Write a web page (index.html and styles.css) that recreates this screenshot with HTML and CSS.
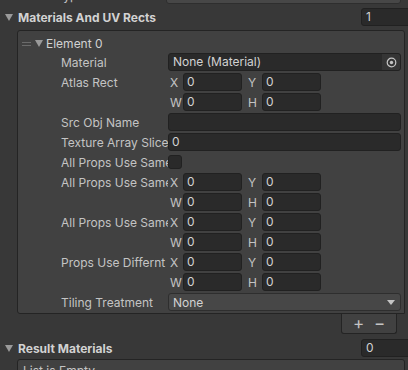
FILE: index.html
```html
<!DOCTYPE html>
<html lang="en">
<head>
    <meta charset="UTF-8">
    <title>Inspector</title>
    <link rel="stylesheet" href="styles.css">
</head>
<body>
    <div class="inspector">
        <div class="prop top-row">
            <span class="prop-label">Result Type</span>
            <div class="popup wide">Atlas<span class="popup-arrow"></span></div>
        </div>

        <div class="foldout-head">
            <span class="fold-arrow"></span>
            <span class="foldout-title">Materials And UV Rects</span>
            <div class="field size-field">1</div>
        </div>

        <div class="list-box">
            <div class="element-head">
                <span class="drag-handle"></span>
                <span class="fold-arrow"></span>
                <span class="element-title">Element 0</span>
            </div>

            <div class="prop">
                <span class="prop-label">Material</span>
                <div class="field object-field">
                    <span class="object-name">None (Material)</span>
                    <span class="picker">
                        <svg width="11" height="11" viewBox="0 0 11 11">
                            <circle cx="5.5" cy="5.5" r="4.3" fill="none" stroke="#c4c4c4" stroke-width="1.2"/>
                            <circle cx="5.5" cy="5.5" r="1.7" fill="#c4c4c4"/>
                        </svg>
                    </span>
                </div>
            </div>
            <div class="prop">
                <span class="prop-label">Atlas Rect</span>
                <div class="vec">
                    <span class="axis">X</span><div class="field num">0</div>
                    <span class="axis second">Y</span><div class="field num">0</div>
                </div>
            </div>
            <div class="prop">
                <span class="prop-label"></span>
                <div class="vec">
                    <span class="axis">W</span><div class="field num">0</div>
                    <span class="axis second">H</span><div class="field num">0</div>
                </div>
            </div>
            <div class="prop">
                <span class="prop-label">Src Obj Name</span>
                <div class="field text-field"></div>
            </div>
            <div class="prop">
                <span class="prop-label">Texture Array Slice</span>
                <div class="field text-field">0</div>
            </div>
            <div class="prop">
                <span class="prop-label">All Props Use Same</span>
                <span class="checkbox"></span>
            </div>
            <div class="prop">
                <span class="prop-label">All Props Use Same</span>
                <div class="vec">
                    <span class="axis">X</span><div class="field num">0</div>
                    <span class="axis second">Y</span><div class="field num">0</div>
                </div>
            </div>
            <div class="prop">
                <span class="prop-label"></span>
                <div class="vec">
                    <span class="axis">W</span><div class="field num">0</div>
                    <span class="axis second">H</span><div class="field num">0</div>
                </div>
            </div>
            <div class="prop">
                <span class="prop-label">All Props Use Same</span>
                <div class="vec">
                    <span class="axis">X</span><div class="field num">0</div>
                    <span class="axis second">Y</span><div class="field num">0</div>
                </div>
            </div>
            <div class="prop">
                <span class="prop-label"></span>
                <div class="vec">
                    <span class="axis">W</span><div class="field num">0</div>
                    <span class="axis second">H</span><div class="field num">0</div>
                </div>
            </div>
            <div class="prop">
                <span class="prop-label">Props Use Differnt</span>
                <div class="vec">
                    <span class="axis">X</span><div class="field num">0</div>
                    <span class="axis second">Y</span><div class="field num">0</div>
                </div>
            </div>
            <div class="prop">
                <span class="prop-label"></span>
                <div class="vec">
                    <span class="axis">W</span><div class="field num">0</div>
                    <span class="axis second">H</span><div class="field num">0</div>
                </div>
            </div>
            <div class="prop">
                <span class="prop-label">Tiling Treatment</span>
                <div class="popup">None<span class="popup-arrow"></span></div>
            </div>
        </div>

        <div class="list-footer">
            <span class="footer-btn">+</span>
            <span class="footer-btn">&minus;</span>
        </div>

        <div class="foldout-head result-head">
            <span class="fold-arrow"></span>
            <span class="foldout-title">Result Materials</span>
            <div class="field size-field">0</div>
        </div>

        <div class="list-box empty-box">
            <span class="empty-text">List is Empty</span>
        </div>
    </div>
</body>
</html>
```

FILE: styles.css
```css
body {
    margin: 0;
    padding: 0;
    width: 408px;
    height: 370px;
    overflow: hidden;
    background-color: #383838;
    font-family: 'Inter', 'Noto Sans', sans-serif;
    font-size: 12px;
    color: #c4c4c4;
}
.inspector {
    display: flex;
    flex-direction: column;
}
.prop {
    display: flex;
    align-items: center;
    height: 18px;
    margin-bottom: 2px;
}
.prop-label {
    width: 107px;
    flex-shrink: 0;
    white-space: nowrap;
    overflow: hidden;
}
.top-row {
    margin-top: -14px;
    margin-bottom: 0;
    padding-left: 18px;
}
.top-row .prop-label {
    width: 148px;
}
.field {
    box-sizing: border-box;
    height: 18px;
    line-height: 16px;
    padding: 0 3px;
    background-color: #2a2a2a;
    border: 1px solid #212121;
    border-radius: 3px;
    color: #d2d2d2;
    white-space: nowrap;
    overflow: hidden;
}
.popup {
    box-sizing: border-box;
    display: flex;
    align-items: center;
    width: 233px;
    height: 18px;
    padding: 0 4px;
    background-color: #474747;
    border: 1px solid #2e2e2e;
    border-radius: 3px;
    color: #d2d2d2;
}
.popup.wide {
    width: 235px;
}
.popup-arrow {
    margin-left: auto;
    margin-right: 1px;
    width: 0;
    height: 0;
    border-left: 4px solid transparent;
    border-right: 4px solid transparent;
    border-top: 5px solid #c4c4c4;
}
.foldout-head {
    display: flex;
    align-items: center;
    height: 18px;
    margin-top: 4px;
    padding-left: 5px;
}
.fold-arrow {
    width: 0;
    height: 0;
    border-left: 4px solid transparent;
    border-right: 4px solid transparent;
    border-top: 7px solid #9a9a9a;
    margin-right: 5px;
}
.foldout-title {
    font-weight: bold;
    color: #d2d2d2;
}
.size-field {
    margin-left: auto;
    width: 50px;
    margin-right: -3px;
    padding-left: 4px;
}
.list-box {
    margin: 4px 3px 0 17px;
    padding: 3px 3px 0 0;
    background-color: #414141;
    border: 1px solid #242424;
    border-radius: 3px 3px 0 3px;
}
.element-head {
    display: flex;
    align-items: center;
    height: 19px;
    color: #d2d2d2;
}
.drag-handle {
    width: 9px;
    height: 2px;
    margin-left: 4px;
    margin-right: 4px;
    border-top: 1px solid #6b6b6b;
    border-bottom: 1px solid #6b6b6b;
}
.element-head .fold-arrow {
    margin-right: 3px;
}
.list-box .prop {
    padding-left: 43px;
}
.text-field, .object-field {
    width: 233px;
}
.object-field {
    display: flex;
    padding-right: 0;
}
.object-name {
    flex: 1;
    padding-left: 1px;
}
.picker {
    display: flex;
    align-items: center;
    justify-content: center;
    width: 18px;
    background-color: #353535;
    border-radius: 0 2px 2px 0;
}
.vec {
    display: flex;
    align-items: center;
}
.axis {
    width: 15px;
    padding-left: 2px;
    box-sizing: border-box;
}
.axis.second {
    width: 20px;
    padding-left: 6px;
}
.num {
    width: 59px;
}
.checkbox {
    box-sizing: border-box;
    width: 14px;
    height: 14px;
    background-color: #2a2a2a;
    border: 1px solid #212121;
    border-radius: 3px;
}
.list-footer {
    display: flex;
    align-items: center;
    justify-content: space-around;
    align-self: flex-end;
    box-sizing: border-box;
    width: 56px;
    height: 20px;
    margin-right: 11px;
    padding: 0 6px 1px;
    background-color: #414141;
    border: 1px solid #242424;
    border-top: none;
    border-radius: 0 0 3px 3px;
}
.footer-btn {
    font-size: 17px;
    line-height: 17px;
    color: #c4c4c4;
}
.result-head {
    margin-top: 5px;
}
.empty-box {
    margin-top: 2px;
    height: 30px;
    padding: 3px 0 0 5px;
}
.empty-text {
    color: #c4c4c4;
}
```
